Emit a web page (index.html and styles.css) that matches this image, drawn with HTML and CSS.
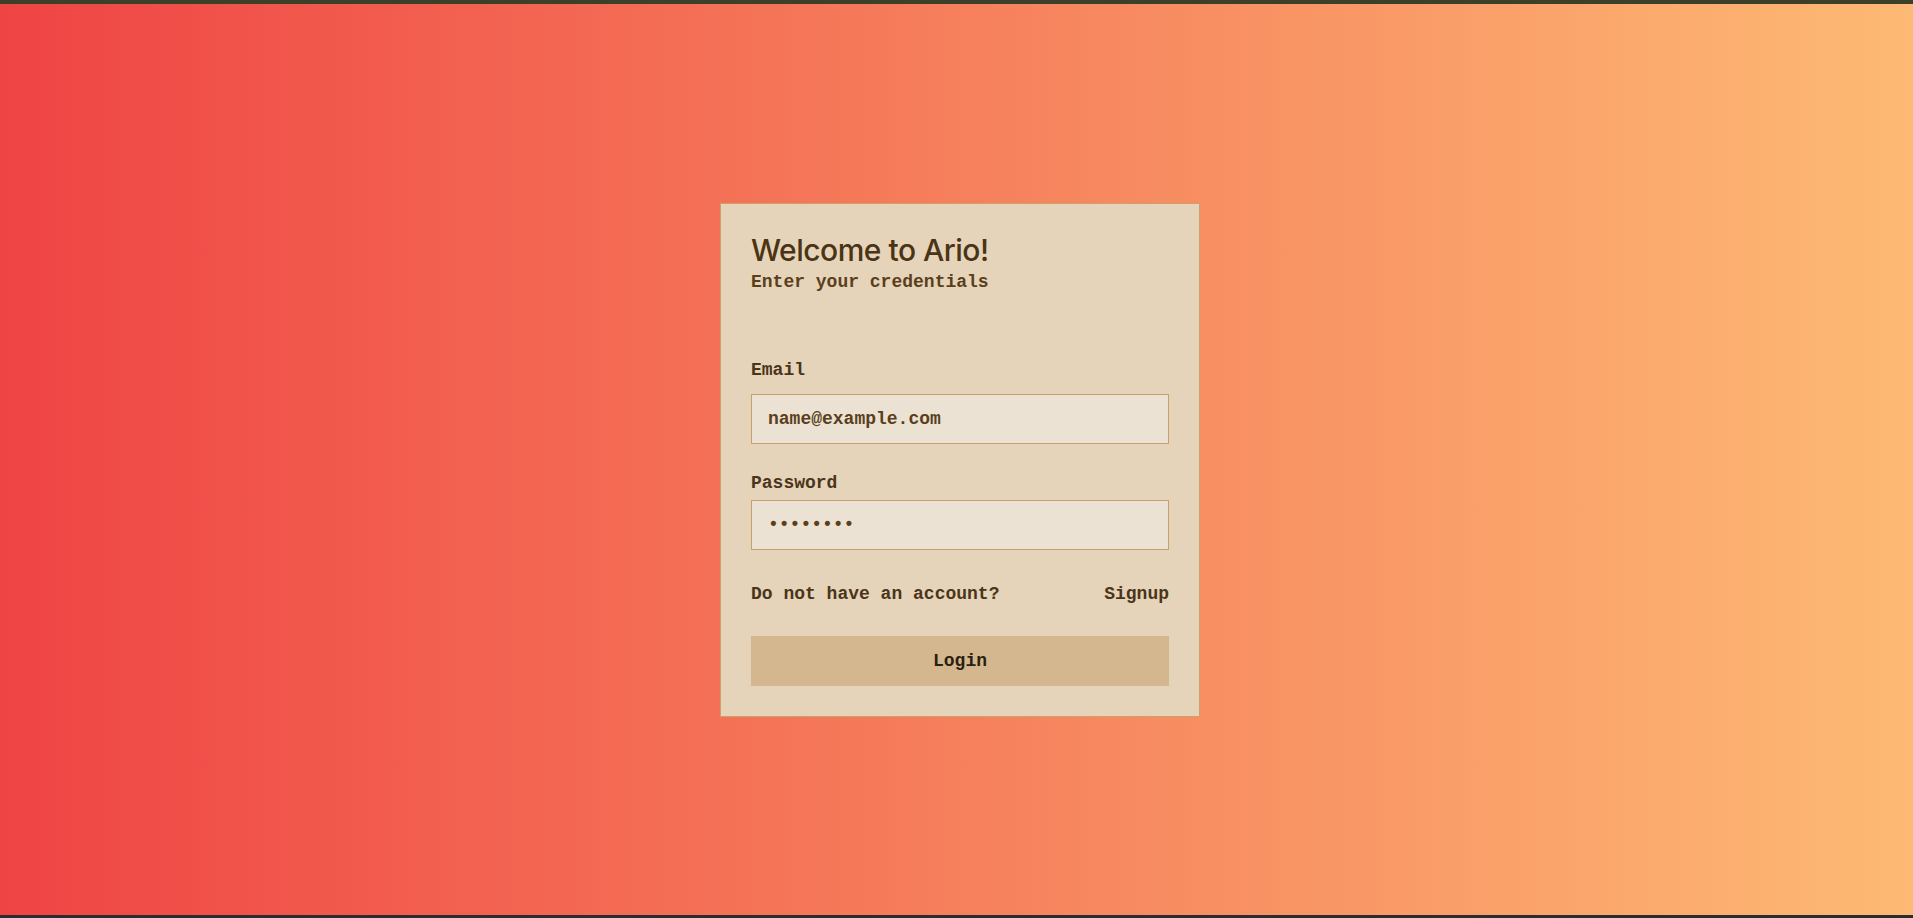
FILE: index.html
```html
<!DOCTYPE html>
<html lang="en">
<head>
<meta charset="utf-8">
<title>Ario - Login</title>
<link rel="stylesheet" href="styles.css">
</head>
<body>
<div class="topbar"></div>
<main class="stage">
  <div class="card">
    <h1 class="title">Welcome to Ario!</h1>
    <p class="subtitle">Enter your credentials</p>
    <form class="form">
      <label class="label" for="email">Email</label>
      <input class="input" id="email" type="email" value="name@example.com">
      <label class="label label-pw" for="pw">Password</label>
      <input class="input input-pw" id="pw" type="password" value="12345678">
      <div class="row">
        <span>Do not have an account?</span>
        <a class="link" href="#">Signup</a>
      </div>
      <button class="btn" type="button">Login</button>
    </form>
  </div>
</main>
<div class="bottombar"></div>
</body>
</html>
```
FILE: styles.css
```css
html, body {
  margin: 0;
  padding: 0;
  height: 100%;
}
body {
  display: flex;
  flex-direction: column;
  background: linear-gradient(to right, #ef4444, #fdba74);
  font-family: "Liberation Mono", "DejaVu Sans Mono", monospace;
  color: #4b3518;
}
.topbar {
  height: 4px;
  background: #3d4029;
  flex: none;
}
.bottombar {
  height: 3px;
  background: #2a2c2d;
  flex: none;
}
.stage {
  flex: 1;
  display: flex;
  align-items: center;
  justify-content: center;
  padding-left: 7px;
}
.card {
  width: 418px;
  padding: 30px;
  background: #e5d3ba;
  border: 1px solid #c8a36a;
}
.title {
  margin: -2px 0 1px;
  font-family: Inter, "Noto Sans", sans-serif;
  font-weight: 500;
  font-size: 30px;
  line-height: 36px;
  letter-spacing: -0.5px;
  color: #4a3414;
}
.subtitle {
  margin: 0;
  font-size: 18px;
  line-height: 27px;
  font-weight: bold;
  color: #5a3f1c;
}
.form {
  display: flex;
  flex-direction: column;
  margin-top: 61px;
}
.label {
  font-size: 18px;
  line-height: 27px;
  font-weight: bold;
  margin-bottom: 10px;
  color: #4b3518;
}
.label-pw {
  margin-top: 26px;
  margin-bottom: 3px;
}
.input {
  box-sizing: border-box;
  height: 50px;
  width: 100%;
  padding: 0 16px;
  background: #ece2d3;
  border: 1px solid #c9a06a;
  border-radius: 0;
  font-family: "Liberation Mono", monospace;
  font-weight: bold;
  font-size: 18px;
  color: #5a3f1c;
  outline: none;
}
.row {
  display: flex;
  justify-content: space-between;
  margin-top: 31px;
  font-size: 18px;
  line-height: 27px;
  font-weight: bold;
  color: #4b3518;
}
.link {
  color: #4b3518;
  text-decoration: none;
}
.btn {
  margin-top: 28px;
  height: 50px;
  width: 100%;
  border: none;
  border-radius: 0;
  background: #d4b78f;
  font-family: "Liberation Mono", monospace;
  font-weight: bold;
  font-size: 18px;
  color: #2b1f10;
  cursor: pointer;
}
```
